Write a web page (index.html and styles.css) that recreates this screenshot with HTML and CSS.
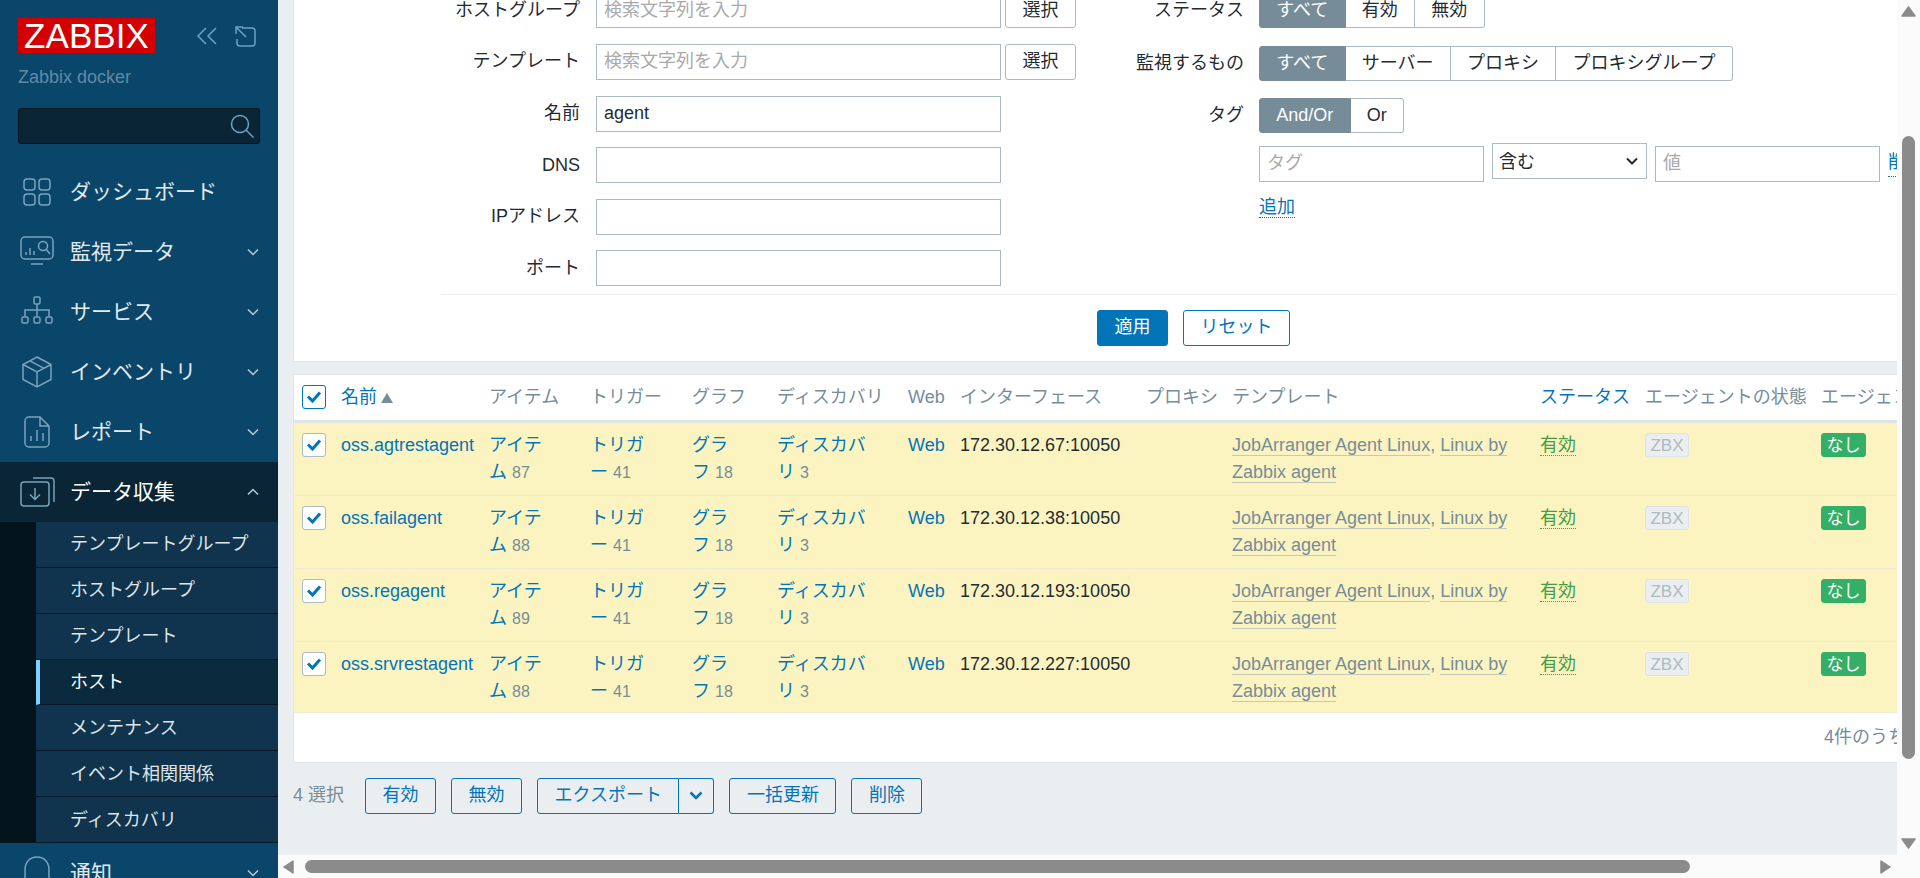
FILE: index.html
```html
<!DOCTYPE html>
<html lang="ja">
<head>
<meta charset="utf-8">
<title>ホスト</title>
<link rel="stylesheet" href="styles.css">
</head>
<body>
<aside class="sidebar">
  <div class="brand">
    <div class="logo">ZABBIX</div>
    <button class="side-tool first-tool"><svg width="22" height="22" viewBox="0 0 22 22"><path d="M10 3 2 11l8 8M20 3l-8 8 8 8"/></svg></button>
    <button class="side-tool"><svg width="22" height="22" viewBox="0 0 22 22"><path d="M8 3h10a3 3 0 0 1 3 3v12a3 3 0 0 1-3 3H6a3 3 0 0 1-3-3V14M2 2l10 10M2 9V2h7"/></svg></button>
  </div>
  <div class="server">Zabbix docker</div>
  <div class="search">
    <svg width="24" height="24" viewBox="0 0 24 24"><circle cx="10" cy="10" r="8.5"/><path d="m16 16 7.5 7.5"/></svg>
  </div>
  <nav class="nav">
    <a class="nav-item"><span class="nav-icon"><svg width="28" height="28" viewBox="0 0 28 28"><rect x="1" y="1" width="11" height="11" rx="3"/><rect x="16" y="1" width="11" height="11" rx="3"/><rect x="1" y="16" width="11" height="11" rx="3"/><rect x="16" y="16" width="11" height="11" rx="3"/></svg></span><span class="nav-label">ダッシュボード</span></a>
    <a class="nav-item"><span class="nav-icon"><svg width="34" height="32" viewBox="0 0 34 32"><rect x="1" y="1" width="32" height="22" rx="4"/><path d="M11 28h12M6 16v3M10 12v7M14 15v4"/><circle cx="23" cy="10" r="4.500"/><path d="m26 13 4 5"/></svg></span><span class="nav-label">監視データ</span><svg class="chev" width="12" height="8" viewBox="0 0 12 8"><path d="m1 1.500 5 5 5-5"/></svg></a>
    <a class="nav-item"><span class="nav-icon"><svg width="34" height="34" viewBox="0 0 34 34"><rect x="14" y="2" width="6" height="7" rx="1.500"/><path d="M17 9v6M5 21v-6h24v6M17 15v6"/><rect x="2" y="22" width="6" height="6" rx="1.500"/><rect x="14" y="22" width="6" height="6" rx="1.500"/><rect x="26" y="22" width="6" height="6" rx="1.500"/></svg></span><span class="nav-label">サービス</span><svg class="chev" width="12" height="8" viewBox="0 0 12 8"><path d="m1 1.500 5 5 5-5"/></svg></a>
    <a class="nav-item"><span class="nav-icon"><svg width="32" height="34" viewBox="0 0 32 34"><path d="M16 2 30 9.500v15L16 32 2 24.500v-15zM2 9.500 16 17l14-7.500M16 17v15M9 5.800l14 7.500"/></svg></span><span class="nav-label">インベントリ</span><svg class="chev" width="12" height="8" viewBox="0 0 12 8"><path d="m1 1.500 5 5 5-5"/></svg></a>
    <a class="nav-item"><span class="nav-icon"><svg width="28" height="34" viewBox="0 0 28 34"><path d="M17 2H6a4 4 0 0 0-4 4v22a4 4 0 0 0 4 4h16a4 4 0 0 0 4-4V11zM17 2v9h9M8 26v-5M14 26V15M20 26v-8"/></svg></span><span class="nav-label">レポート</span><svg class="chev" width="12" height="8" viewBox="0 0 12 8"><path d="m1 1.500 5 5 5-5"/></svg></a>
    <a class="nav-item is-open"><span class="nav-icon"><svg width="35" height="32" viewBox="0 0 35 32"><rect x="1" y="6" width="28" height="24" rx="3"/><path d="M13 2h18a3 3 0 0 1 3 3v21M15 12v11M10 18.500l5 5 5-5"/></svg></span><span class="nav-label">データ収集</span><svg class="chev" width="12" height="8" viewBox="0 0 12 8"><path d="m1 6.500 5-5 5 5"/></svg></a>
    <div class="submenu">
      <a class="sub-item">テンプレートグループ</a>
      <a class="sub-item">ホストグループ</a>
      <a class="sub-item">テンプレート</a>
      <a class="sub-item is-current">ホスト</a>
      <a class="sub-item">メンテナンス</a>
      <a class="sub-item">イベント相関関係</a>
      <a class="sub-item">ディスカバリ</a>
    </div>
    <a class="nav-item"><span class="nav-icon"><svg width="32" height="34" viewBox="0 0 32 34"><path d="M1 30C5 26 4 20 4 14 4 6 9 1 16 1s12 5 12 13c0 6-1 12 3 16z"/></svg></span><span class="nav-label">通知</span><svg class="chev" width="12" height="8" viewBox="0 0 12 8"><path d="m1 1.500 5 5 5-5"/></svg></a>
  </nav>
</aside>
<div class="viewport">
  <div class="viewport-row">
    <main class="content">
      <section class="filter">
        <div class="filter-cols">
          <div class="filter-left">
            <label class="f-label">ホストグループ</label><input class="f-input" placeholder="検索文字列を入力"><button class="plain-btn">選択</button>
            <label class="f-label">テンプレート</label><input class="f-input" placeholder="検索文字列を入力"><button class="plain-btn">選択</button>
            <label class="f-label">名前</label><input class="f-input" value="agent"><span></span>
            <label class="f-label">DNS</label><input class="f-input"><span></span>
            <label class="f-label">IPアドレス</label><input class="f-input"><span></span>
            <label class="f-label">ポート</label><input class="f-input"><span></span>
          </div>
          <div class="filter-right">
            <label class="f-label">ステータス</label>
            <div class="seg"><span class="seg-item is-on">すべて</span><span class="seg-item">有効</span><span class="seg-item">無効</span></div>
            <label class="f-label">監視するもの</label>
            <div class="seg"><span class="seg-item is-on">すべて</span><span class="seg-item">サーバー</span><span class="seg-item">プロキシ</span><span class="seg-item">プロキシグループ</span></div>
            <label class="f-label">タグ</label>
            <div class="seg"><span class="seg-item is-on">And/Or</span><span class="seg-item">Or</span></div>
            <span></span>
            <div class="tag-row">
              <input class="f-input tag-input" placeholder="タグ">
              <span class="select-wrap">
                <select class="tag-select"><option>含む</option></select>
                <svg class="select-chev" width="12" height="8" viewBox="0 0 12 8"><path d="m1 1.500 5 5 5-5"/></svg>
              </span>
              <input class="f-input tag-input" placeholder="値">
              <a class="dotted tag-remove">削除</a>
            </div>
            <span></span>
            <div class="tag-add"><a class="dotted">追加</a></div>
          </div>
        </div>
        <div class="filter-actions">
          <button class="btn btn-primary">適用</button>
          <button class="btn">リセット</button>
        </div>
      </section>

      <section class="hosts">
        <div class="row head">
          <span class="check check-head"><svg width="16" height="13" viewBox="0 0 16 13"><path d="m2 6.500 4.500 4.500L14 2.500"/></svg></span>
          <a class="link">名前<svg class="sort" width="12" height="10" viewBox="0 0 12 10"><path d="M6 0l6 10H0z"/></svg></a>
          <span>アイテム</span><span>トリガー</span><span>グラフ</span><span>ディスカバリ</span><span>Web</span><span>インターフェース</span><span>プロキシ</span><span>テンプレート</span>
          <a class="link">ステータス</a><span>エージェントの状態</span><span>エージェント</span>
        </div>
        <div class="row">
          <span class="check"><svg width="16" height="13" viewBox="0 0 16 13"><path d="m2 6.500 4.500 4.500L14 2.500"/></svg></span>
          <a class="link">oss.agtrestagent</a>
          <span><a class="link">アイテ<br>ム</a> <small>87</small></span><span><a class="link">トリガ<br>ー</a> <small>41</small></span><span><a class="link">グラ<br>フ</a> <small>18</small></span><span><a class="link">ディスカバ<br>リ</a> <small>3</small></span>
          <a class="link">Web</a><span class="ip">172.30.12.67:10050</span><span></span>
          <span class="tpl"><a>JobArranger Agent Linux</a>, <a>Linux by</a><br><a>Zabbix agent</a></span>
          <span><a class="status">有効</a></span><span><b class="badge-off">ZBX</b></span><span><b class="badge-on">なし</b></span>
        </div>
        <div class="row">
          <span class="check"><svg width="16" height="13" viewBox="0 0 16 13"><path d="m2 6.500 4.500 4.500L14 2.500"/></svg></span>
          <a class="link">oss.failagent</a>
          <span><a class="link">アイテ<br>ム</a> <small>88</small></span><span><a class="link">トリガ<br>ー</a> <small>41</small></span><span><a class="link">グラ<br>フ</a> <small>18</small></span><span><a class="link">ディスカバ<br>リ</a> <small>3</small></span>
          <a class="link">Web</a><span class="ip">172.30.12.38:10050</span><span></span>
          <span class="tpl"><a>JobArranger Agent Linux</a>, <a>Linux by</a><br><a>Zabbix agent</a></span>
          <span><a class="status">有効</a></span><span><b class="badge-off">ZBX</b></span><span><b class="badge-on">なし</b></span>
        </div>
        <div class="row">
          <span class="check"><svg width="16" height="13" viewBox="0 0 16 13"><path d="m2 6.500 4.500 4.500L14 2.500"/></svg></span>
          <a class="link">oss.regagent</a>
          <span><a class="link">アイテ<br>ム</a> <small>89</small></span><span><a class="link">トリガ<br>ー</a> <small>41</small></span><span><a class="link">グラ<br>フ</a> <small>18</small></span><span><a class="link">ディスカバ<br>リ</a> <small>3</small></span>
          <a class="link">Web</a><span class="ip">172.30.12.193:10050</span><span></span>
          <span class="tpl"><a>JobArranger Agent Linux</a>, <a>Linux by</a><br><a>Zabbix agent</a></span>
          <span><a class="status">有効</a></span><span><b class="badge-off">ZBX</b></span><span><b class="badge-on">なし</b></span>
        </div>
        <div class="row last-row">
          <span class="check"><svg width="16" height="13" viewBox="0 0 16 13"><path d="m2 6.500 4.500 4.500L14 2.500"/></svg></span>
          <a class="link">oss.srvrestagent</a>
          <span><a class="link">アイテ<br>ム</a> <small>88</small></span><span><a class="link">トリガ<br>ー</a> <small>41</small></span><span><a class="link">グラ<br>フ</a> <small>18</small></span><span><a class="link">ディスカバ<br>リ</a> <small>3</small></span>
          <a class="link">Web</a><span class="ip">172.30.12.227:10050</span><span></span>
          <span class="tpl"><a>JobArranger Agent Linux</a>, <a>Linux by</a><br><a>Zabbix agent</a></span>
          <span><a class="status">有効</a></span><span><b class="badge-off">ZBX</b></span><span><b class="badge-on">なし</b></span>
        </div>
        <div class="hosts-foot">4件のうち4件を表示</div>
      </section>

      <div class="actions">
        <span class="selected">4 選択</span>
        <button class="btn">有効</button>
        <button class="btn">無効</button>
        <span class="split"><button class="btn split-main">エクスポート</button><button class="btn split-arrow"><svg width="14" height="9" viewBox="0 0 14 9"><path d="m1.500 1.500 5.500 5.500 5.500-5.500"/></svg></button></span>
        <button class="btn">一括更新</button>
        <button class="btn">削除</button>
      </div>
    </main>
    <div class="vbar">
      <svg class="arrow" width="15" height="11" viewBox="0 0 15 11"><path d="M7.500 1 14 10H1z"/></svg>
      <div class="vbar-track"><div class="vbar-thumb"></div></div>
      <svg class="arrow" width="15" height="11" viewBox="0 0 15 11"><path d="M7.500 10 1 1h13z"/></svg>
    </div>
  </div>
  <div class="hbar">
    <svg class="arrow" width="11" height="14" viewBox="0 0 11 14"><path d="M1 7l9-6v12z"/></svg>
    <div class="hbar-thumb"></div>
    <svg class="arrow" width="11" height="14" viewBox="0 0 11 14"><path d="M10 7 1 13V1z"/></svg>
  </div>
</div>
</body>
</html>
```

FILE: styles.css
```css
* { box-sizing: border-box; }
html, body { height: 100%; }
body {
  margin: 0;
  display: flex;
  height: 878px;
  overflow: hidden;
  font: 18px/27px "Liberation Sans", "Noto Sans CJK JP", sans-serif;
  color: #1f2c33;
  background: #ebeef0;
}
a { text-decoration: none; }
button { font: inherit; cursor: pointer; }

/* Sidebar */
.sidebar { flex: 0 0 278px; height: 878px; overflow: hidden; background: #0a466a; color: #f2f2f2; }
.brand { display: flex; align-items: center; padding: 18px 0 0 18px; height: 53px; }
.logo {
  width: 137px; height: 35px;
  display: flex; align-items: center; justify-content: center;
  background: #d40000; color: #fff;
  font-size: 35px; line-height: 35px; letter-spacing: .1px;
}
.side-tool { padding: 0; border: 0; background: none; width: 22px; height: 22px; margin-left: 16px; }
.first-tool { margin-left: 41px; }
.side-tool svg { display: block; fill: none; stroke: #6ea3c4; stroke-width: 1.5; }
.server { margin: 11px 0 0 18px; line-height: 27px; color: #5f8aa6; height: 27px; }
.search {
  margin: 17px 18px 0; height: 36px; width: 242px;
  display: flex; align-items: center; justify-content: flex-end; padding-right: 5px;
  background: #0a2535; border: 1px solid #04141d; border-radius: 3px;
}
.search svg { fill: none; stroke: #6ea3c4; stroke-width: 1.5; }
.nav { margin-top: 18px; }
.nav-item { display: flex; align-items: center; height: 60px; font-size: 21px; color: #e4e9ec; }
.nav-icon { flex: 0 0 70px; display: flex; justify-content: center; padding-left: 4px; }
.nav-icon svg { fill: none; stroke: #7aa3bd; stroke-width: 1.5; display: block; }
.nav-label { flex: 1; padding-bottom: 2px; }
.chev { fill: none; stroke: #b9cbd6; stroke-width: 1.5; margin-right: 19px; }
.is-open { background: #0a2535; color: #fff; }
.submenu { background: #04141d; padding-left: 36px; }
.sub-item {
  display: flex; align-items: center;
  height: 45.86px; padding: 1px 0 0 34px;
  background: #10334e; color: #dfe5e9;
  border-bottom: 1px solid #04182a;
  font-size: 18px;
}
.is-current { background: #0a2a3e; color: #fff; border-left: 4px solid #7fcfff; padding-left: 30px; }

/* Viewport */
.viewport { flex: 1; min-width: 0; display: flex; flex-direction: column; height: 878px; }
.viewport-row { flex: 1; min-height: 0; display: flex; }
.content { flex: 1; min-width: 0; overflow: hidden; padding-left: 15px; }

/* Filter */
.filter {
  width: 1800px; margin-top: -9px;
  padding-top: 1.4px;
  background: #fff; border: 1px solid #e2e6e9; border-top: 0;
}
.filter-cols { display: flex; align-items: flex-start; }
.filter-left {
  flex: 0 0 782px;
  display: grid; grid-template-columns: 285px 426px 71px;
  row-gap: 15.6px;
  padding-bottom: 7.6px;
  align-items: center;
}
.f-label { text-align: right; line-height: 27px; margin-right: -1px; }
.filter-left .f-input { margin-left: 17px; width: 405px; }
.f-input {
  height: 36px; padding: 0 7px;
  font: inherit; color: #1f2c33;
  background: #fff; border: 1px solid #acbbc2; border-radius: 0; outline: 0;
}
.f-input::placeholder { color: #a9a9a9; opacity: 1; }
.plain-btn { height: 36px; width: 71px; padding: 0; background: #fff; color: #1f2c33; border: 1px solid #acbbc2; border-radius: 3px; }
.filter-right {
  flex: 1;
  display: grid; grid-template-columns: 167px 1fr;
  column-gap: 16px; row-gap: 17.4px;
  padding-top: 1px;
  align-items: center;
}
.seg { display: inline-flex; justify-self: start; height: 35px; }
.seg-item {
  display: flex; align-items: center; padding: 0 16.25px;
  background: #fff; border: 1px solid #acbbc2; border-left-width: 0;
}
.seg-item:first-child { border-left-width: 1px; border-radius: 3px 0 0 3px; }
.seg-item:last-child { border-radius: 0 3px 3px 0; }
.is-on { background: #768d99; border-color: #768d99; color: #fff; }
.tag-row { display: flex; align-items: flex-start; margin-top: -8px; }
.tag-input { width: 225px; margin-top: 3px; }
.select-wrap { position: relative; display: block; width: 155px; height: 36px; margin: 0 8px; }
.tag-select {
  display: block; width: 100%; height: 36px; padding: 4px 6px 0;
  appearance: none;
  font: inherit; color: #1f2c33; background: #fff;
  border: 1px solid #acbbc2; border-radius: 0;
}
.select-chev {
  position: absolute; right: 9px; top: 14px;
  fill: none; stroke: #1f2c33; stroke-width: 2;
  pointer-events: none;
}
.tag-remove { margin: 6px 0 0 8px; white-space: nowrap; }
.tag-add { margin-top: -5px; line-height: 27px; }
.dotted { color: #0275b8; border-bottom: 1px dotted #0275b8; }
.filter-actions {
  margin: 0 0 0 147px; padding: 15px 0 15px 656px;
  display: flex; gap: 15px;
  border-top: 1px solid #ebeef0;
}

/* Buttons */
.btn {
  height: 36px; padding: 0 16.5px;
  background: transparent; color: #0275b8;
  border: 1px solid #0275b8; border-radius: 3px;
}
.filter-actions .btn { background: #fff; }
.filter-actions .btn-primary { background: #0275b8; color: #fff; }

/* Hosts */
.hosts { width: 1800px; margin-top: 12px; background: #fff; border: 1px solid #e2e6e9; }
.row {
  display: grid;
  grid-template-columns: 39px 148px 101px 102px 85px 131px 52px 186px 86px 308px 105px 176px 200px;
  height: 73px;
  padding: 9px 0 0 8px;
  line-height: 27px;
  background: #fbf4c1;
  border-bottom: 1px solid #f0ecd2;
  white-space: nowrap;
}
.last-row { height: 71px; }
.head {
  height: 48px; padding-top: 9px;
  background: #fff; color: #768d99;
  border-bottom: 3px solid #dfe4e7;
}
.check {
  width: 24px; height: 24px; margin-top: 1px;
  display: flex; align-items: center; justify-content: center;
  background: #fff; border: 1px solid #acbbc2; border-radius: 3px;
}
.check svg { fill: none; stroke: #0275b8; stroke-width: 3; }
.check-head { border-color: #0275b8; }
.link { color: #0275b8; }
.sort { fill: #768d99; margin-left: 4px; }
small { font-size: 16px; color: #768d99; }
.tpl { color: #768d99; }
.tpl a { color: #768d99; border-bottom: 1px solid #c3c9bd; }
.status { color: #429e47; border-bottom: 1px dotted #429e47; }
.badge-off, .badge-on {
  display: inline-block; height: 24px; line-height: 24px;
  vertical-align: top; margin-top: 1px;
  border-radius: 3px; font-weight: 400; font-size: 17px; text-align: center;
}
.badge-off { width: 44px; background: #ebeef0; border: 1px solid #dde2e5; color: #acbbc2; }
.badge-on { width: 45px; background: #34af67; color: #fff; border: 1px solid #34af67; }
.hosts-foot { height: 49px; padding: 11px 0 0 1530px; color: #768d99; white-space: nowrap; }

/* Action bar */
.actions { display: flex; align-items: center; margin-top: 15px; height: 36px; white-space: nowrap; }
.selected { width: 72px; color: #768d99; }
.actions > .btn, .split { margin-right: 15px; }
.split { display: flex; }
.split-main { border-radius: 3px 0 0 3px; }
.split-arrow { width: 35px; padding: 0; border-left: 0; border-radius: 0 3px 3px 0; display: flex; align-items: center; justify-content: center; }
.split-arrow svg { fill: none; stroke: #0275b8; stroke-width: 2.5; }

/* Scrollbars */
.vbar { flex: 0 0 23px; height: 855px; display: flex; flex-direction: column; align-items: center; background: #fbfbfb; padding: 6px 0; }
.vbar-track { flex: 1; width: 100%; display: flex; justify-content: center; }
.vbar-thumb { width: 13px; height: 623px; margin-top: 119px; background: #8b8b8b; border-radius: 7px; }
.hbar { flex: 0 0 23px; display: flex; align-items: center; background: #fbfbfb; padding: 0 29px 0 5px; }
.hbar-thumb { width: 1385px; height: 13px; margin-left: 11px; margin-right: auto; background: #8b8b8b; border-radius: 7px; }
.arrow { fill: #8b8b8b; stroke: #8b8b8b; stroke-width: 1.5; stroke-linejoin: round; flex: none; }
```
